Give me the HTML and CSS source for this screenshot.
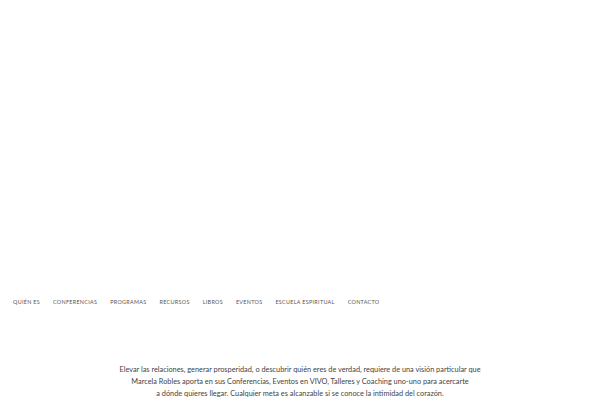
FILE: index.html
```
<!DOCTYPE html>
<html lang="es">
<head>
<meta charset="utf-8">
<link rel="stylesheet" href="styles.css">
</head>
<body>
<div class="hero"></div>
<nav class="nav">
  <a>QUIÉN ES</a>
  <a>CONFERENCIAS</a>
  <a>PROGRAMAS</a>
  <a>RECURSOS</a>
  <a>LIBROS</a>
  <a>EVENTOS</a>
  <a>ESCUELA ESPIRITUAL</a>
  <a>CONTACTO</a>
</nav>
<section class="intro">
  <p>Elevar las relaciones, generar prosperidad, o descubrir quién eres de verdad, requiere de una visión particular que<br>Marcela Robles aporta en sus Conferencias, Eventos en VIVO, Talleres y Coaching uno-uno para acercarte<br>a dónde quieres llegar. Cualquier meta es alcanzable si se conoce la intimidad del corazón.</p>
</section>
</body>
</html>
```
FILE: styles.css
```
html, body { margin: 0; padding: 0; background: #fff; }
body { font-family: Lato, "Open Sans", sans-serif; width: 600px; height: 400px; overflow: hidden; }
.hero { height: 296px; }
.nav { display: flex; gap: 13px; padding-left: 13px; height: 12px; align-items: center; }
.nav a { font-size: 5.4px; letter-spacing: 0.32px; color: #555; }
.intro { padding-top: 56px; text-align: center; }
.intro p { margin: 0; font-size: 7.35px; line-height: 12px; color: #444; }
```
